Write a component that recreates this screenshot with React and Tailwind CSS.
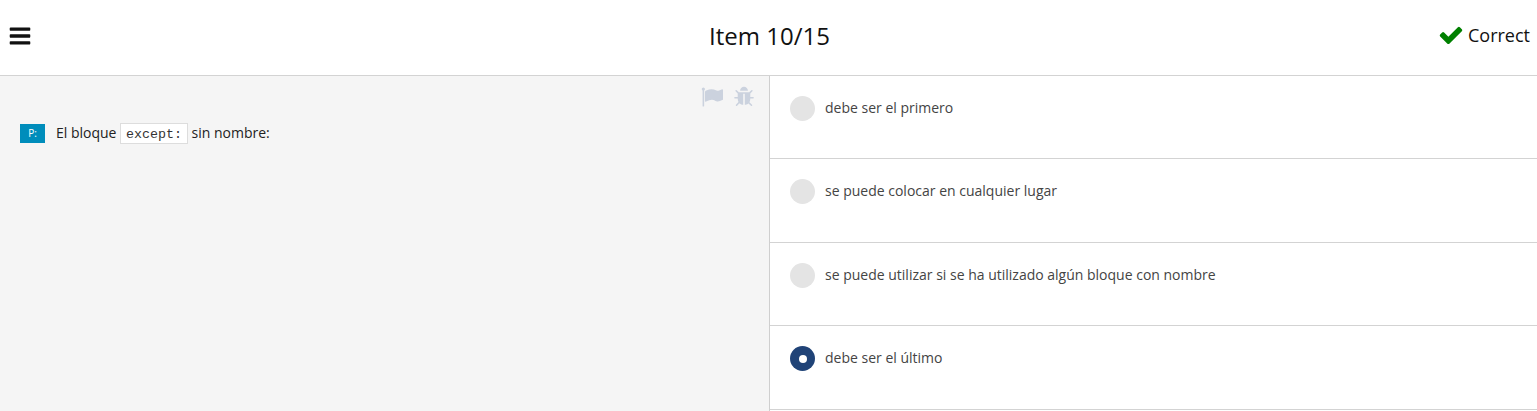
const icons = {
  bars: "M1664 1344v128q0 26-19 45t-45 19h-1408q-26 0-45-19t-19-45v-128q0-26 19-45t45-19h1408q26 0 45 19t19 45zm0-512v128q0 26-19 45t-45 19h-1408q-26 0-45-19t-19-45v-128q0-26 19-45t45-19h1408q26 0 45 19t19 45zm0-512v128q0 26-19 45t-45 19h-1408q-26 0-45-19t-19-45v-128q0-26 19-45t45-19h1408q26 0 45 19t19 45z",
  check: "M1671 566q0 40-28 68l-724 724-136 136q-28 28-68 28t-68-28l-136-136-362-362q-28-28-28-68t28-68l136-136q28-28 68-28t68 28l294 295 656-657q28-28 68-28t68 28l136 136q28 28 28 68z",
  flag: "M320 256q0 72-64 110v1266q0 13-9.5 22.5t-22.5 9.5h-64q-13 0-22.5-9.5t-9.5-22.5v-1266q-64-38-64-110 0-53 37.5-90.5t90.5-37.5 90.5 37.5 37.5 90.5zm1472 64v763q0 25-12.5 38.5t-39.5 27.5q-215 116-369 116-61 0-123.5-22t-108.5-48-115.5-48-142.5-22q-192 0-464 146-17 9-33 9-26 0-45-19t-19-45v-742q0-32 31-55 21-14 79-43 236-120 421-120 107 0 200 29t219 88q38 19 88 19 54 0 117.5-21t110-47 88-47 54.5-21q26 0 45 19t19 45z",
  bug: "M1696 960q0 26-19 45t-45 19h-224q0 171-67 290l208 209q19 19 19 45t-19 45q-18 19-45 19t-45-19l-198-197q-5 5-15 13t-42 28.5-65 36.5-82 29-97 13v-896h-128v896q-51 0-101.5-13.5t-87-33-66-39-43.5-32.5l-15-14-183 207q-20 21-48 21-24 0-43-16-19-18-20.5-44.5t15.5-46.5l202-227q-58-114-58-274h-224q-26 0-45-19t-19-45 19-45 45-19h224v-294l-173-173q-19-19-19-45t19-45 45-19 45 19l173 173h844l173-173q19-19 45-19t45 19 19 45-19 45l-173 173v294h224q26 0 45 19t19 45zm-480-576h-640q0-133 93.5-226.5t226.5-93.5 226.5 93.5 93.5 226.5z",
};

const answers = [
  { text: "debe ser el primero", height: "h-[83px]" },
  { text: "se puede colocar en cualquier lugar", height: "h-[84px]" },
  { text: "se puede utilizar si se ha utilizado algún bloque con nombre", height: "h-[83px]" },
  { text: "debe ser el último", height: "h-[84px]", selected: true },
];

function Icon({ name, className }) {
  return (
    <svg viewBox="0 0 1792 1792" fill="currentColor" aria-hidden="true" className={`shrink-0 ${className}`}>
      <path d={icons[name]} />
    </svg>
  );
}

function Answer({ text, height, selected }) {
  return (
    <label className={`${height} flex shrink-0 items-start border-b border-[#d3d3d3] pl-5 pt-5`}>
      <span className={`flex size-[25px] items-center justify-center rounded-full ${selected ? "bg-[#204377]" : "bg-[#e4e4e4]"}`}>
        {selected && <span className="size-2 rounded-full bg-white" />}
      </span>
      <span className="ml-2.5 text-[14px] leading-6 text-[#444]">{text}</span>
    </label>
  );
}

export default function App() {
  return (
    <div className="flex h-[411px] flex-col overflow-hidden bg-white font-['Open_Sans',sans-serif] text-[#111]">
      <header className="grid h-[76px] shrink-0 grid-cols-3 items-center border-b border-[#d3d3d3] pb-[5px] pl-2 pr-[7px]">
        <Icon name="bars" className="mt-px size-6" />
        <h1 className="pl-px pt-px text-center text-2xl">Item 10/15</h1>
        <div className="flex items-center justify-end gap-1 text-lg">
          <Icon name="check" className="size-[26px] text-[#008000]" />
          <span>Correct</span>
        </div>
      </header>
      <main className="flex min-h-0 grow">
        <section className="w-[770px] border-r border-[#cfcfcf] bg-[#f5f5f5]">
          <div className="flex h-[47px] justify-end gap-[9.4px] pr-[14.3px] pt-[10.3px] text-[#cbd2de]">
            <Icon name="flag" className="size-[22px]" />
            <Icon name="bug" className="size-[22px]" />
          </div>
          <div className="flex h-[21px] items-center pl-5 text-[14px]">
            <span className="mr-[11px] flex h-[19px] w-[25px] items-center justify-center bg-[#008dbb] text-[10px] text-white">P:</span>
            <span className="-mt-[3px] text-[#222]">El bloque</span>
            <code className="ml-1 mr-[3px] flex h-[21px] w-[68px] items-center justify-center border border-[#ddd] bg-white pr-px pt-[3px] font-['Liberation_Mono',monospace] text-[13.33px] text-[#333]">except:</code>
            <span className="-mt-[3px] text-[#222]">sin nombre:</span>
          </div>
        </section>
        <section className="flex min-w-0 grow flex-col">
          {answers.map((a) => <Answer key={a.text} {...a} />)}
        </section>
      </main>
    </div>
  );
}
